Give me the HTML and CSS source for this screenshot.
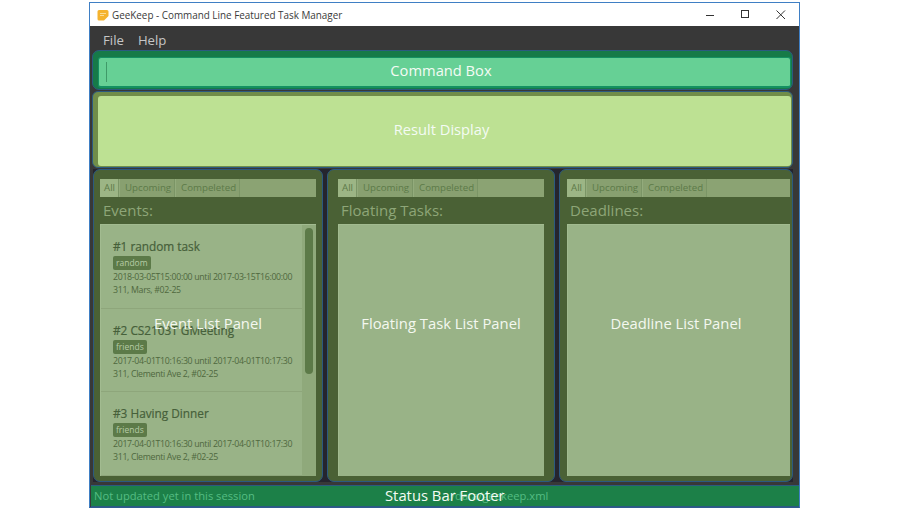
FILE: index.html
```html
<!DOCTYPE html>
<html lang="en">
<head>
<meta charset="utf-8">
<title>GeeKeep</title>
<link rel="stylesheet" href="styles.css">
</head>
<body>
<div class="window">
  <header class="titlebar">
    <svg class="app-icon" width="12" height="12" viewBox="0 0 12 12"><path d="M2 1h8a1.500 1.500 0 0 1 1.500 1.500V7L7 11.500H2A1.500 1.500 0 0 1 .5 10V2.500A1.500 1.500 0 0 1 2 1z" fill="#f5b32e"/><path d="M3 4.500h6M3 6.500h4" stroke="#fbdc93" stroke-width="1"/></svg>
    <span class="title-text">GeeKeep - Command Line Featured Task Manager</span>
    <div class="controls">
      <svg width="12" height="12" viewBox="0 0 12 12"><path d="M1 6.500h8" stroke="#333" stroke-width="1"/></svg>
      <svg width="12" height="12" viewBox="0 0 12 12"><rect x="1.500" y="1.500" width="7" height="7" fill="none" stroke="#333"/></svg>
      <svg width="12" height="12" viewBox="0 0 12 12"><path d="M1.500 1.500l8.500 8.500M10 1.500l-8.500 8.500" stroke="#333" stroke-width="1"/></svg>
    </div>
  </header>
  <nav class="menubar"><span>File</span><span>Help</span></nav>
  <section class="command-panel">
    <div class="command-box"><i class="caret"></i><span class="label">Command Box</span></div>
  </section>
  <section class="result-panel">
    <div class="result-box"><span class="label">Result Display</span></div>
  </section>
  <main class="columns">
    <section class="column col-events">
      <div class="tabs"><span class="tab">All</span><span class="tab">Upcoming</span><span class="tab">Compeleted</span></div>
      <h2 class="heading">Events:</h2>
      <div class="list">
        <div class="cards">
          <article class="card">
            <h3>#1 random task</h3>
            <span class="tag">random</span>
            <p>2018-03-05T15:00:00 until 2017-03-15T16:00:00</p>
            <p>311, Mars, #02-25</p>
          </article>
          <article class="card">
            <h3>#2 CS2103T GMeeting</h3>
            <span class="tag">friends</span>
            <p>2017-04-01T10:16:30 until 2017-04-01T10:17:30</p>
            <p>311, Clementi Ave 2, #02-25</p>
          </article>
          <article class="card">
            <h3>#3 Having Dinner</h3>
            <span class="tag">friends</span>
            <p>2017-04-01T10:16:30 until 2017-04-01T10:17:30</p>
            <p>311, Clementi Ave 2, #02-25</p>
          </article>
        </div>
        <div class="scrolltrack"><div class="thumb"></div></div>
      </div>
      <span class="overlay">Event List Panel</span>
    </section>
    <section class="column col-floating">
      <div class="tabs"><span class="tab">All</span><span class="tab">Upcoming</span><span class="tab">Compeleted</span></div>
      <h2 class="heading">Floating Tasks:</h2>
      <div class="list"></div>
      <span class="overlay">Floating Task List Panel</span>
    </section>
    <section class="column col-deadlines">
      <div class="tabs"><span class="tab">All</span><span class="tab">Upcoming</span><span class="tab">Compeleted</span></div>
      <h2 class="heading">Deadlines:</h2>
      <div class="list"></div>
      <span class="overlay">Deadline List Panel</span>
    </section>
  </main>
  <footer class="statusbar">
    <span class="status-left">Not updated yet in this session</span>
    <span class="status-right">./data/geekeep.xml</span>
    <span class="status-label">Status Bar Footer</span>
  </footer>
</div>
</body>
</html>
```
FILE: styles.css
```css
* { box-sizing: border-box; }
html, body { margin: 0; height: 100%; background: #fff; }
body { padding: 2px 0 4px 89px; font-family: "Open Sans", "Noto Sans", sans-serif; overflow: hidden; }
.window {
  width: 711px; height: 506px; background: #383838;
  border: 1px solid #3f7fc4; border-bottom-color: #2f5a8f;
  display: flex; flex-direction: column;
}
.titlebar {
  height: 23px; background: #fff; flex: none;
  display: flex; align-items: center; padding-left: 7px;
}
.app-icon { flex: none; margin-right: 3px; }
.title-text { font-size: 9.900px; color: #3a3a3a; white-space: nowrap; }
.controls { margin-left: auto; display: flex; gap: 23px; padding-right: 12px; }
.menubar {
  height: 24px; flex: none; display: flex; gap: 14px; padding: 5px 0 0 13px;
  font-size: 13.200px; line-height: 18px; color: #c6c6c6;
}
.command-panel {
  height: 40px; flex: none; margin: 0 6px 0 2px; padding: 6px 1px 1px 5px;
  background: #167a48; border: 1px solid #2b5a80; border-radius: 7px;
}
.command-box {
  height: 100%; background: #66d095; border: 1px solid #149062; border-width: 1px 1px 2px 1px; border-radius: 3px;
  display: flex; align-items: center; justify-content: center; position: relative; padding: 0 7px 5px 0;
}
.caret { position: absolute; left: 7px; top: 4px; bottom: 4px; width: 1px; background: #3f9a68; }
.label { color: #f4fbf4; font-size: 14.700px; }
.result-panel {
  height: 77px; flex: none; margin: 1px 6px 0 2px; padding: 4px 1px 1px 5px;
  background: #708d49; border: 1px solid #2b5a80; border-radius: 6px;
}
.result-box {
  height: 100%; background: #bde193; border-radius: 3px;
  display: flex; align-items: center; justify-content: center; padding: 0 6px 5px 0;
}
.columns {
  height: 313px; flex: none; margin: 1px 6px 0 3px; display: flex; gap: 4px; background: #25252e;
}
.column {
  position: relative; background: #4a6135; border: 1px solid #2b5a80; border-radius: 7px; flex: none;
  display: flex; flex-direction: column; padding-top: 9px; padding-bottom: 5px;
}
.col-events { width: 230px; padding-left: 6px; padding-right: 6px; }
.col-floating { width: 228px; padding-left: 10px; padding-right: 10px; }
.col-deadlines { width: 234px; padding-left: 7px; padding-right: 2px; }
.tabs {
  height: 18px; flex: none; display: flex; background: #8ba373;
  font-size: 9.700px; line-height: 18px; color: #5c7a48;
}
.tab { padding: 0 3px 0 5px; border-right: 1px solid #7b9566; border-left: 1px solid #93ab7c; background: #88a070; white-space: nowrap; }
.tab:first-child { background: #9cb585; padding: 0 3px 0 4px; border-left: 0; }
.heading {
  margin: 0; height: 27px; flex: none; font-size: 15px; font-weight: 400; line-height: 26px; color: #8ea678;
  padding-left: 3px;
}
.list {
  flex: 1; min-height: 0; display: flex; overflow: hidden; background: #99b387; border: 1px solid #a2bb90;
  border-width: 1px 0 0 1px;
}
.cards { flex: 1; min-width: 0; }
.card { height: 83.500px; padding: 13px 0 0 12px; border-bottom: 1px solid #8ea67b; color: #50683d; }
.card h3 { margin: 0; font-size: 11.800px; line-height: 16px; font-weight: 400; color: #46603a; -webkit-text-stroke: .2px #46603a; white-space: nowrap; }
.tag {
  display: block; width: fit-content; margin-top: 2px; padding: 0 3px; height: 14px; border-radius: 2px;
  background: #5c7a48; color: #b6cca6; font-size: 8.500px; line-height: 13px;
}
.card p { margin: 0; font-size: 8.800px; line-height: 13px; letter-spacing: -.33px; white-space: nowrap; color: #4f683e; }
.card .tag + p { margin-top: 1px; }
.scrolltrack { width: 14px; flex: none; background: #8fa97b; padding: 3px 3px 0 3px; }
.thumb { height: 146px; background: #5c7a48; border-radius: 4px; }
.overlay {
  position: absolute; left: 0; right: 0; top: 143px; text-align: center;
  font-size: 14.800px; line-height: 20px; color: #f4f8f0; white-space: nowrap;
}
.statusbar {
  position: relative; margin-top: 3px; height: 22px; flex: none; background: #1c8048;
  border: 1px solid #2b5a80; border-width: 1px 0; display: flex; align-items: center;
  font-size: 11.200px; color: #55bd83; margin-left: 1px; padding-bottom: 2px;
}
.status-left { margin-left: 3px; }
.status-right { position: absolute; left: 357px; top: 2px; }
.status-label { position: absolute; left: 294px; top: -1px; font-size: 14.800px; line-height: 20px; color: #f4fbf4; white-space: nowrap; }
```
